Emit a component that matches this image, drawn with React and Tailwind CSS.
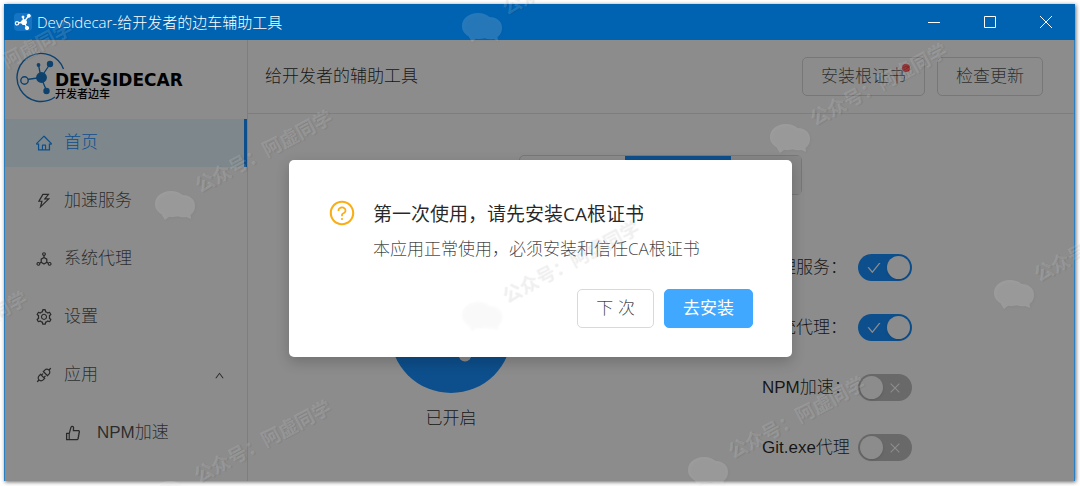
import { useState } from "react";
import {
  AiOutlineHome,
  AiOutlineThunderbolt,
  AiOutlineDeploymentUnit,
  AiOutlineSetting,
  AiOutlineApi,
  AiOutlineLike,
  AiOutlineQuestionCircle,
  AiOutlineUp,
  AiOutlineCheck,
  AiOutlineClose,
} from "react-icons/ai";

const menu = [
  { label: "首页", Icon: AiOutlineHome, active: true },
  { label: "加速服务", Icon: AiOutlineThunderbolt },
  { label: "系统代理", Icon: AiOutlineDeploymentUnit },
  { label: "设置", Icon: AiOutlineSetting },
];

const marks = [
  "left-[-85px] top-[115px]",
  "left-[482px] top-[26px]",
  "left-[790px] top-[137px]",
  "left-[175px] top-[204px]",
  "left-[481px] top-[314px]",
  "left-[1014px] top-[293px]",
  "left-[-130px] top-[385px]",
  "left-[708px] top-[470px]",
  "left-[174px] top-[494px]",
];

function Molecule({ className }) {
  return (
    <svg viewBox="0 0 18 18" className={className} fill="currentColor" stroke="currentColor" aria-hidden="true">
      <path d="M4 10L10 9M10 9L9 4M10 9L14.500 3M10 9L13 15" strokeWidth="1.300" />
      <circle cx="3" cy="10.300" r="1.700" fill="none" strokeWidth="1.100" />
      <circle cx="10" cy="9.200" r="2.500" />
      <circle cx="14.800" cy="2.800" r="1.500" />
      <circle cx="9" cy="4" r="1" />
      <circle cx="13" cy="15" r="1.700" />
    </svg>
  );
}

function Logo() {
  return (
    <div className="flex h-[74px] items-center pl-[10px]">
      <svg viewBox="0 0 52 52" className="-mr-3 h-[52px] w-[52px] shrink-0 text-[#1878c8]" fill="currentColor" stroke="currentColor" aria-hidden="true">
        <path d="M48.500 18A24 24 0 1 0 40 46" fill="none" strokeWidth="1.400" />
        <path d="M12 28.500L26 26.500M26 26.500L23.500 14M26 26.500L35 13M26 26.500L31.500 39.500" strokeWidth="1.300" />
        <circle cx="9.500" cy="29.500" r="3.700" fill="#fff" strokeWidth="1.400" />
        <circle cx="26.500" cy="26.500" r="5.400" stroke="none" />
        <circle cx="35" cy="13" r="3.200" stroke="none" />
        <circle cx="23.500" cy="14" r="1.900" stroke="none" />
        <circle cx="31.500" cy="40" r="3.200" stroke="none" />
      </svg>
      <div className="pt-[17px] text-black">
        <div className="font-['DejaVu_Sans',sans-serif] text-[17px] leading-4 font-bold whitespace-nowrap">DEV-SIDECAR</div>
        <div className="text-[11px] leading-3 font-medium">开发者边车</div>
      </div>
    </div>
  );
}

function MenuItem({ label, Icon, active, open, nested }) {
  return (
    <li className={nested ? "pl-[29px]" : ""}>
      <a
        href="#"
        aria-current={active ? "page" : undefined}
        className={
          active
            ? "flex h-12 items-center gap-[11px] border-r-[3px] border-[#1890ff] bg-[#e6f7ff] pl-[30px] text-[#1890ff]"
            : "flex h-12 items-center gap-[11px] pl-[30px] text-black/70"
        }
      >
        <Icon className="h-[18px] w-[18px] shrink-0" />
        <span className={nested ? "ml-1 flex-1" : "flex-1"}>{label}</span>
        {open && <AiOutlineUp className="mr-[22px] h-[11px] w-[11px]" />}
      </a>
    </li>
  );
}

function SwitchRow({ label, initial }) {
  const [on, setOn] = useState(initial);
  return (
    <label className="flex h-[27px] items-center text-black/85">
      <span className="w-24 whitespace-nowrap">{label}</span>
      <input type="checkbox" role="switch" checked={on} onChange={() => setOn(!on)} className="peer sr-only" />
      <span
        className={
          on
            ? "flex h-[27px] w-[54px] items-center justify-between rounded-full bg-[#1890ff] pr-[2px] pl-2"
            : "flex h-[27px] w-[54px] flex-row-reverse items-center justify-between rounded-full bg-black/25 pr-[10px] pl-[2px]"
        }
      >
        {on ? <AiOutlineCheck className="h-4 w-4 text-white" /> : <AiOutlineClose className="h-[14px] w-[14px] text-white" />}
        <span className="h-[23px] w-[23px] rounded-full bg-white shadow-sm" />
      </span>
    </label>
  );
}

function Watermark({ place }) {
  return (
    <div className={`absolute h-0 w-0 text-white/15 ${place}`}>
      <svg viewBox="0 0 40 36" className="absolute -top-[17px] -left-5 h-9 w-10 drop-shadow-[1px_1px_1px_rgba(0,0,0,0.2)]" fill="currentColor">
        <path d="M16 4C7 4 0 9.500 0 17C0 21.500 2.600 25 6.500 27.300L10 33L14 29.700C17.500 30.200 20.500 29.900 23 29.300C25.500 30.400 28.500 30.500 31.500 29.900L36 32L35.500 28C38.500 25.800 40 22.800 40 19C40 12 34.500 8 27.500 8C24.500 5.300 20.500 4 16 4Z" />
      </svg>
      <span className="absolute -top-[30px] left-[22px] origin-left -rotate-28 text-[19px] leading-7 font-bold whitespace-nowrap text-shadow-[1px_1px_1px_rgba(0,0,0,0.07)]">
        公众号：阿虚同学
      </span>
    </div>
  );
}

export default function App() {
  return (
    <div className="relative flex min-h-screen flex-col overflow-hidden bg-white p-1 pr-[5px] pb-[5px] font-['Liberation_Sans','Noto_Sans_CJK_SC',sans-serif] text-[17px] leading-6 font-light">
      <div className="flex flex-1 flex-col shadow-[1px_1px_4px_rgba(0,0,0,0.6)]">
        <header className="flex h-9 items-center bg-[#0063b1] pr-px pl-[10px] text-white">
          <span className="mr-[5px] flex h-[18px] w-[18px] items-center justify-center rounded-sm bg-[#1674c4]">
            <Molecule className="h-[18px] w-[18px]" />
          </span>
          <h1 className="flex-1 font-['Open_Sans','Noto_Sans_CJK_SC',sans-serif] text-[15px] font-light">DevSidecar-给开发者的边车辅助工具</h1>
          <button type="button" aria-label="最小化" className="flex h-9 w-14 items-center justify-center">
            <svg viewBox="0 0 14 14" className="h-[14px] w-[14px]" stroke="currentColor"><path d="M1 7.500H13" /></svg>
          </button>
          <button type="button" aria-label="最大化" className="flex h-9 w-14 items-center justify-center">
            <svg viewBox="0 0 14 14" className="h-[14px] w-[14px]" stroke="currentColor" fill="none"><path d="M1.500 1.500H12.500V12.500H1.500Z" /></svg>
          </button>
          <button type="button" aria-label="关闭" className="flex h-9 w-14 items-center justify-center">
            <svg viewBox="0 0 14 14" className="h-[14px] w-[14px]" stroke="currentColor"><path d="M1 1L13 13M13 1L1 13" /></svg>
          </button>
        </header>

        <div className="relative flex flex-1 border-x border-[#2a7fc0] bg-white">
          <aside className="w-[243px] shrink-0 border-r border-[#e6e6e6]">
            <Logo />
            <nav>
              <ul className="flex flex-col gap-[10px] pt-[5px]">
                {menu.map((item) => (
                  <MenuItem key={item.label} {...item} />
                ))}
                <MenuItem label="应用" Icon={AiOutlineApi} open />
                <MenuItem label="NPM加速" Icon={AiOutlineLike} nested />
              </ul>
            </nav>
          </aside>

          <main className="flex min-w-0 flex-1 flex-col">
            <div className="flex h-[74px] items-center gap-3 border-b border-[#e6e6e6] pr-[31px] pl-[17px]">
              <h2 className="flex-1 text-black/85">给开发者的辅助工具</h2>
              <button type="button" className="h-[39px] rounded-[5px] border border-[#d9d9d9] px-[18px] text-black/70">
                <span className="relative">
                  安装根证书
                  <span className="absolute -top-[3px] -right-1 h-2 w-2 rounded-full bg-[#ff3b3f]" />
                </span>
              </button>
              <button type="button" className="h-[39px] rounded-[5px] border border-[#d9d9d9] px-[18px] text-black/70">检查更新</button>
            </div>

            <div className="flex justify-center pt-[41px] pr-px">
              <div className="flex h-10 w-[283px] rounded-[5px] border border-[#d9d9d9]">
                <span className="flex-1" />
                <span className="w-[106px] bg-[#1890ff]" />
                <span className="w-[70px] bg-[#f5f5f5]" />
              </div>
            </div>

            <div className="grid grid-cols-2 pt-[59px]">
              <div className="flex flex-col items-center gap-[14px] pt-[17px] pr-[7px]">
                <svg viewBox="0 0 122 122" className="h-[122px] w-[122px]" aria-hidden="true">
                  <circle cx="61" cy="61" r="61" fill="#1890ff" />
                  <circle cx="75" cy="84" r="6.500" fill="#fff" />
                </svg>
                <span className="text-black/85">已开启</span>
              </div>
              <div className="flex flex-col gap-[33px] pl-[101px]">
                <SwitchRow label="代理服务：" initial={true} />
                <SwitchRow label="系统代理：" initial={true} />
                <SwitchRow label="NPM加速：" initial={false} />
                <SwitchRow label="Git.exe代理" initial={false} />
              </div>
            </div>
          </main>

          <div className="absolute inset-0 flex items-start justify-center bg-black/45 pt-[120px] pl-[2px]">
            <section
              role="dialog"
              aria-modal="true"
              aria-labelledby="confirm-title"
              className="w-[503px] rounded-[5px] bg-white px-[39px] pt-[39px] pb-[29px] shadow-[0_5px_14px_rgba(0,0,0,0.2)]"
            >
              <div className="flex gap-[17px] font-['Open_Sans','Noto_Sans_CJK_SC',sans-serif]">
                <AiOutlineQuestionCircle className="h-7 w-7 shrink-0 text-[#faad14]" />
                <div>
                  <h3 id="confirm-title" className="text-[19px] leading-[30px] font-normal text-black/85">第一次使用，请先安装CA根证书</h3>
                  <p className="pt-2 leading-6 text-black/75">本应用正常使用，必须安装和信任CA根证书</p>
                </div>
              </div>
              <div className="flex justify-end gap-[10px] pt-7">
                <button type="button" className="h-[39px] rounded-[5px] border border-[#d9d9d9] px-[18px] text-black/75">下 次</button>
                <button type="button" className="h-[39px] rounded-[5px] border border-[#40a9ff] bg-[#40a9ff] px-[18px] font-normal text-white">去安装</button>
              </div>
            </section>
          </div>
        </div>
      </div>

      <div className="pointer-events-none absolute inset-0 overflow-hidden" aria-hidden="true">
        {marks.map((place) => (
          <Watermark key={place} place={place} />
        ))}
      </div>
    </div>
  );
}
